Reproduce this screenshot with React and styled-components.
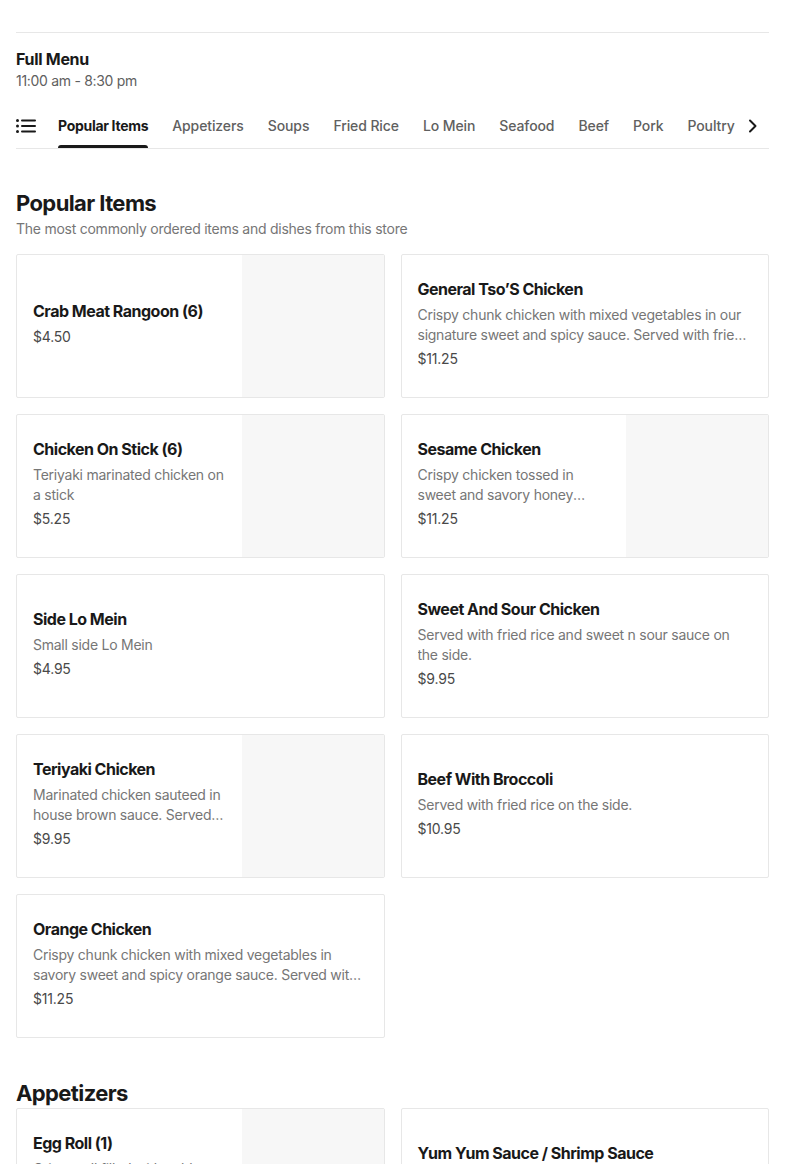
import React from 'react';
import styled, { createGlobalStyle } from 'styled-components';

const GlobalStyle = createGlobalStyle`
    body {
        margin: 0;
        background: #fff;
        font-family: 'Inter', 'Liberation Sans', sans-serif;
        color: #191919;
    }
`

const Page = styled.div`
    padding: 32px 16px 0;
    height: 1164px;
    overflow: hidden;
    box-sizing: border-box;
`
const MenuHeader = styled.div`
    border-top: 1px solid #e7e7e7;
    padding-top: 14px;
`
const MenuName = styled.p`
    margin: 0;
    font-size: 16px;
    line-height: 24px;
    font-weight: 700;
    letter-spacing: -0.3px;
`
const Hours = styled.p`
    margin: 0;
    font-size: 14px;
    line-height: 20px;
    color: #606060;
    letter-spacing: -0.3px;
`
const TabBar = styled.nav`
    position: relative;
    display: flex;
    align-items: center;
    height: 44px;
    margin-top: 13px;
    border-bottom: 1px solid #e7e7e7;
    overflow: hidden;
`
const ListIcon = styled.span`
    display: flex;
    flex: none;
    margin-right: 22px;
`
const Tab = styled.span`
    position: relative;
    flex: none;
    margin-right: 24px;
    font-size: 14px;
    line-height: 44px;
    font-weight: ${({ active }) => (active ? 700 : 500)};
    letter-spacing: ${({ active }) => (active ? '-0.3px' : '-0.1px')};
    color: ${({ active }) => (active ? '#191919' : '#606060')};
    &::after {
        content: '';
        display: ${({ active }) => (active ? 'block' : 'none')};
        position: absolute;
        left: 0;
        right: 0;
        bottom: 0;
        height: 3px;
        border-radius: 3px 3px 0 0;
        background: #191919;
    }
`
const ScrollBtn = styled.span`
    position: absolute;
    right: 0;
    top: 0;
    bottom: 0;
    width: 34px;
    display: flex;
    align-items: center;
    justify-content: center;
    background: linear-gradient(to right, rgba(255,255,255,0.7), #fff 35%);
`
const Section = styled.section`
    padding-top: 40px;
`
const SectionTitle = styled.h2`
    margin: 0;
    font-size: 22px;
    line-height: 28px;
    font-weight: 700;
    letter-spacing: -0.6px;
`
const SectionSub = styled.p`
    margin: 2px 0 0;
    font-size: 14px;
    line-height: 20px;
    color: #767676;
    letter-spacing: -0.25px;
`
const Grid = styled.div`
    display: grid;
    grid-template-columns: 1fr 1fr;
    gap: 16px;
    margin-top: ${({ spaced }) => (spaced ? '15px' : '1px')};
    margin-bottom: 1px;
`
const Card = styled.div`
    display: flex;
    height: 144px;
    box-sizing: border-box;
    border: 1px solid #e7e7e7;
    border-radius: 2px;
    overflow: hidden;
    background: #fff;
`
const CardBody = styled.div`
    flex: 1;
    min-width: 0;
    display: flex;
    flex-direction: column;
    justify-content: center;
    padding: 0 16px 6px;
`
const ItemName = styled.p`
    margin: 0;
    font-size: 16px;
    line-height: 24px;
    font-weight: 700;
    letter-spacing: -0.5px;
`
const ItemDesc = styled.p`
    margin: 4px 0 0;
    font-size: 14px;
    line-height: 20px;
    color: #767676;
    letter-spacing: -0.25px;
    display: -webkit-box;
    -webkit-line-clamp: 2;
    -webkit-box-orient: vertical;
    overflow: hidden;
`
const Price = styled.p`
    margin: 4px 0 0;
    font-size: 14px;
    line-height: 20px;
    color: #494949;
    letter-spacing: -0.2px;
`
const Thumb = styled.div`
    flex: none;
    width: 142px;
    background: #f7f7f7;
`

const tabs = ['Popular Items', 'Appetizers', 'Soups', 'Fried Rice', 'Lo Mein', 'Seafood', 'Beef', 'Pork', 'Poultry', 'Vegetables']

const popular = [
    { name: 'Crab Meat Rangoon (6)', price: '$4.50', img: true },
    { name: 'General Tso’S Chicken', desc: 'Crispy chunk chicken with mixed vegetables in our signature sweet and spicy sauce. Served with fried rice on the side.', price: '$11.25' },
    { name: 'Chicken On Stick (6)', desc: 'Teriyaki marinated chicken on a stick', price: '$5.25', img: true },
    { name: 'Sesame Chicken', desc: 'Crispy chicken tossed in sweet and savory honey sesame sauce.', price: '$11.25', img: true },
    { name: 'Side Lo Mein', desc: 'Small side Lo Mein', price: '$4.95' },
    { name: 'Sweet And Sour Chicken', desc: 'Served with fried rice and sweet n sour sauce on the side.', price: '$9.95' },
    { name: 'Teriyaki Chicken', desc: 'Marinated chicken sauteed in house brown sauce. Served with fried rice.', price: '$9.95', img: true },
    { name: 'Beef With Broccoli', desc: 'Served with fried rice on the side.', price: '$10.95' },
    { name: 'Orange Chicken', desc: 'Crispy chunk chicken with mixed vegetables in savory sweet and spicy orange sauce. Served with fried rice.', price: '$11.25' },
]

const appetizers = [
    { name: 'Egg Roll (1)', desc: 'Crispy roll filled with cabbage, carrots and pork.', price: '$1.75', img: true },
    { name: 'Yum Yum Sauce / Shrimp Sauce', desc: 'Side of sauce.', price: '$0.75' },
]

const MenuCard = ({ item }) => (
    <Card>
        <CardBody>
            <ItemName>{item.name}</ItemName>
            {item.desc && <ItemDesc>{item.desc}</ItemDesc>}
            <Price>{item.price}</Price>
        </CardBody>
        {item.img && <Thumb />}
    </Card>
)

const App = () => {
    return (
        <Page>
            <GlobalStyle />
            <MenuHeader>
                <MenuName>Full Menu</MenuName>
                <Hours>11:00 am - 8:30 pm</Hours>
            </MenuHeader>
            <TabBar>
                <ListIcon>
                    <svg width="20" height="14" viewBox="0 0 20 14" fill="#191919">
                        <circle cx="1.5" cy="1.5" r="1.5" />
                        <circle cx="1.5" cy="7" r="1.5" />
                        <circle cx="1.5" cy="12.5" r="1.5" />
                        <rect x="5" y="0.5" width="15" height="2" rx="1" />
                        <rect x="5" y="6" width="15" height="2" rx="1" />
                        <rect x="5" y="11.5" width="15" height="2" rx="1" />
                    </svg>
                </ListIcon>
                {tabs.map((t, i) => <Tab key={t} active={i === 0}>{t}</Tab>)}
                <ScrollBtn>
                    <svg width="16" height="16" viewBox="0 0 16 16" fill="none" stroke="#191919" strokeWidth="2" strokeLinecap="round" strokeLinejoin="round">
                        <path d="M6 2.5 11.5 8 6 13.5" />
                    </svg>
                </ScrollBtn>
            </TabBar>
            <Section>
                <SectionTitle>Popular Items</SectionTitle>
                <SectionSub>The most commonly ordered items and dishes from this store</SectionSub>
                <Grid spaced>
                    {popular.map(item => <MenuCard key={item.name} item={item} />)}
                </Grid>
            </Section>
            <Section>
                <SectionTitle>Appetizers</SectionTitle>
                <Grid>
                    {appetizers.map(item => <MenuCard key={item.name} item={item} />)}
                </Grid>
            </Section>
        </Page>
    )
}

export default App;
